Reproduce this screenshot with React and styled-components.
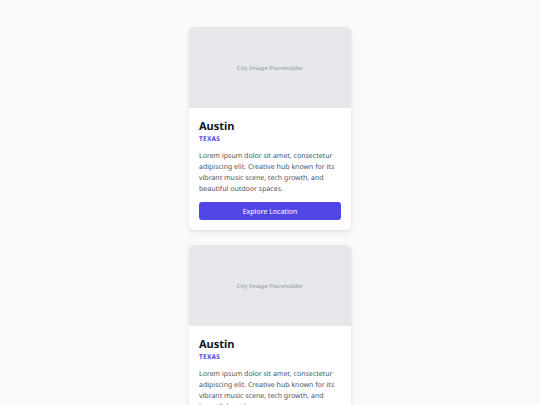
import React from 'react'
import styled, { createGlobalStyle } from 'styled-components'

const GlobalStyle = createGlobalStyle`
    html, body {
        margin: 0;
        padding: 0;
        background-color: #f9fafb;
        font-family: 'Noto Sans', 'Open Sans', sans-serif;
    }
`

const cities = [
    { name: 'Austin', state: 'Texas' },
    { name: 'Austin', state: 'Texas' },
]

const App = () =>
    <>
        <GlobalStyle />
        <StyledPage>
            {cities.map((city, i) =>
                <StyledCard key={i}>
                    <StyledImage>City Image Placeholder</StyledImage>
                    <StyledBody>
                        <StyledTitle>{city.name}</StyledTitle>
                        <StyledState>{city.state}</StyledState>
                        <StyledP>
                            Lorem ipsum dolor sit amet, consectetur adipiscing elit. Creative hub known for its vibrant music scene, tech growth, and beautiful outdoor spaces.
                        </StyledP>
                        <StyledButton>Explore Location</StyledButton>
                    </StyledBody>
                </StyledCard>
            )}
        </StyledPage>
    </>

export default App

const StyledPage = styled.main`
    min-height: 405px;
    box-sizing: border-box;
    padding-top: 27px;
    display: flex;
    flex-direction: column;
    align-items: center;
    gap: 15px;
`

const StyledCard = styled.article`
    width: 162px;
    background-color: #fff;
    border-radius: 5px;
    overflow: hidden;
    box-shadow: 0 2px 6px rgba(0, 0, 0, .08), 0 1px 2px rgba(0, 0, 0, .05);
`

const StyledImage = styled.div`
    height: 81px;
    background-color: #e5e7eb;
    display: flex;
    align-items: center;
    justify-content: center;
    color: #9ca3af;
    font-size: 6px;
    font-weight: 500;
`

const StyledBody = styled.div`
    padding: 10px;
    display: flex;
    flex-direction: column;
    text-rendering: geometricPrecision;
`

const StyledTitle = styled.h3`
    margin: 0;
    font-size: 11px;
    line-height: 17px;
    font-weight: 700;
    color: #111827;
`

const StyledState = styled.span`
    margin-top: -1px;
    font-size: 6.5px;
    line-height: 9px;
    font-weight: 700;
    letter-spacing: .04em;
    text-transform: uppercase;
    color: #4f46e5;
`

const StyledP = styled.p`
    margin: 8px 0 0;
    font-size: 7px;
    line-height: 11px;
    color: #4b5563;
`

const StyledButton = styled.button`
    margin-top: 7px;
    height: 18px;
    border: none;
    border-radius: 3px;
    background-color: #4f46e5;
    color: #fff;
    font-family: inherit;
    font-size: 7px;
    font-weight: 400;
    cursor: pointer;
`
